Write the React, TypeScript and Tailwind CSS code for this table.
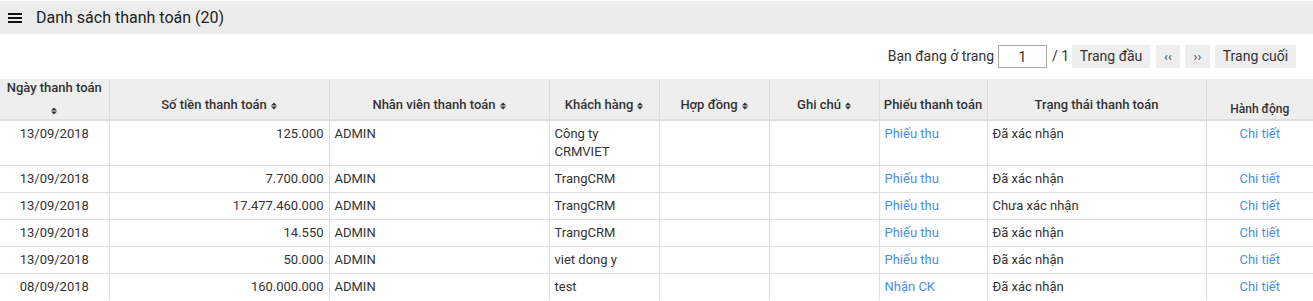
const rows = [
  { date: "13/09/2018", amount: "125.000", staff: "ADMIN", customer: "Công ty CRMVIET", voucher: "Phiếu thu", status: "Đã xác nhận" },
  { date: "13/09/2018", amount: "7.700.000", staff: "ADMIN", customer: "TrangCRM", voucher: "Phiếu thu", status: "Đã xác nhận" },
  { date: "13/09/2018", amount: "17.477.460.000", staff: "ADMIN", customer: "TrangCRM", voucher: "Phiếu thu", status: "Chưa xác nhận" },
  { date: "13/09/2018", amount: "14.550", staff: "ADMIN", customer: "TrangCRM", voucher: "Phiếu thu", status: "Đã xác nhận" },
  { date: "13/09/2018", amount: "50.000", staff: "ADMIN", customer: "viet dong y", voucher: "Phiếu thu", status: "Đã xác nhận" },
  { date: "08/09/2018", amount: "160.000.000", staff: "ADMIN", customer: "test", voucher: "Nhận CK", status: "Đã xác nhận" },
];

function SortIcon() {
  return (
    <svg width="6" height="8" viewBox="0 0 6 8" className="ml-[4px] inline-block align-middle">
      <path d="M0 3.4 L3 0.4 L6 3.4 Z" fill="#333" />
      <path d="M0 4.6 L6 4.6 L3 7.6 Z" fill="#333" />
    </svg>
  );
}

function Th({ children, sort = true, className = "" }: { children: React.ReactNode; sort?: boolean; className?: string }) {
  return (
    <th className={`border-l border-[#dddddd] px-1 pb-[5px] align-bottom text-center text-[13px] font-medium leading-[18px] text-[#333] ${className}`}>
      {children}
      {sort && <SortIcon />}
    </th>
  );
}

export default function App() {
  const td = "border-l border-t border-[#dddddd] px-[5px] pt-[4px] pb-[4px] align-top leading-[18px]";
  return (
    <div className="w-[1313px] bg-white text-[#333] font-['Roboto',sans-serif]">
      <div className="mt-px flex h-[33px] items-center bg-[#ececec] pl-[8px]">
        <svg width="14" height="10" viewBox="0 0 14 10">
          <rect x="0" y="0" width="14" height="2" fill="#111" />
          <rect x="0" y="4" width="14" height="2" fill="#111" />
          <rect x="0" y="8" width="14" height="2" fill="#111" />
        </svg>
        <h1 className="ml-[14px] text-[16px] font-normal text-[#222]">Danh sách thanh toán (20)</h1>
      </div>

      <div className="mt-[11px] flex h-[23px] items-center justify-end pr-[17px] text-[14px] text-[#333]">
        <span>Bạn đang ở trang</span>
        <input
          readOnly
          value="1"
          className="ml-[4px] h-[23px] w-[49px] border border-[#a9a9a9] text-center text-[14px] outline-none"
        />
        <span className="ml-[5px] w-[14px] whitespace-nowrap">/ 1</span>
        <button className="ml-[6px] h-[23px] w-[78px] bg-[#eeeeee] text-[14px]">Trang đầu</button>
        <button className="ml-[6px] h-[23px] w-[24px] bg-[#eeeeee] text-[13px] text-[#445]">‹‹</button>
        <button className="ml-[5px] h-[23px] w-[25px] bg-[#eeeeee] text-[13px] text-[#445]">››</button>
        <button className="ml-[5px] h-[23px] w-[81px] bg-[#eeeeee] text-[14px]">Trang cuối</button>
      </div>

      <table className="mt-[11px] w-[1313px] table-fixed border-collapse text-[13px]">
        <colgroup>
          <col className="w-[109px]" />
          <col className="w-[220px]" />
          <col className="w-[220px]" />
          <col className="w-[110px]" />
          <col className="w-[110px]" />
          <col className="w-[110px]" />
          <col className="w-[108px]" />
          <col className="w-[219px]" />
          <col className="w-[107px]" />
        </colgroup>
        <thead>
          <tr className="h-[41px] border-b-2 border-[#dddddd] bg-[#eeeeee]">
            <th className="px-1 pt-0 align-top text-center text-[13px] font-medium leading-[18px] text-[#333]">
              <div>Ngày thanh toán</div>
              <div className="mt-[8px] flex h-[12px] items-center justify-center">
                <svg width="6" height="8" viewBox="0 0 6 8">
                  <path d="M0 3.4 L3 0.4 L6 3.4 Z" fill="#333" />
                  <path d="M0 4.6 L6 4.6 L3 7.6 Z" fill="#333" />
                </svg>
              </div>
            </th>
            <Th>Số tiền thanh toán</Th>
            <Th>Nhân viên thanh toán</Th>
            <Th>Khách hàng</Th>
            <Th>Hợp đồng</Th>
            <Th>Ghi chú</Th>
            <Th sort={false} className="whitespace-nowrap">Phiếu thanh toán</Th>
            <Th sort={false}>Trạng thái thanh toán</Th>
            <Th sort={false} className="!pb-[1px] !text-[12px]">Hành động</Th>
          </tr>
        </thead>
        <tbody>
          {rows.map((r, i) => (
            <tr key={i}>
              <td className={`${td} border-l-0 text-center`}>{r.date}</td>
              <td className={`${td} text-right`}>{r.amount}</td>
              <td className={td}>{r.staff}</td>
              <td className={td}>{r.customer}</td>
              <td className={td}></td>
              <td className={td}></td>
              <td className={`${td} text-[#4a8fe3]`}>{r.voucher}</td>
              <td className={td}>{r.status}</td>
              <td className={`${td} text-center text-[#4a8fe3]`}>Chi tiết</td>
            </tr>
          ))}
        </tbody>
      </table>
    </div>
  );
}
